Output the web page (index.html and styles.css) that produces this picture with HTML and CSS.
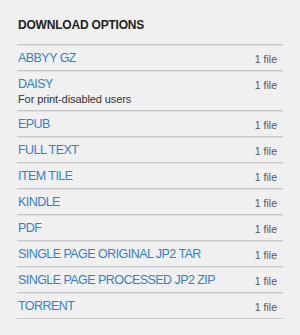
FILE: index.html
```html
<!DOCTYPE html>
<html lang="en">
<head>
  <meta charset="UTF-8">
  <title>Download Options</title>
  <link rel="stylesheet" href="styles.css">
</head>
<body>
<div class="panel">
  <h5 class="panel-title">DOWNLOAD OPTIONS</h5>
  <div class="format-group">
    <a class="format-summary" href="#"><span class="format-name">ABBYY GZ</span><span class="format-count">1 file</span></a>
  </div>
  <div class="format-group">
    <a class="format-summary" href="#"><span class="format-name">DAISY</span><span class="format-count">1 file</span></a>
    <div class="format-note">For print-disabled users</div>
  </div>
  <div class="format-group">
    <a class="format-summary" href="#"><span class="format-name">EPUB</span><span class="format-count">1 file</span></a>
  </div>
  <div class="format-group">
    <a class="format-summary" href="#"><span class="format-name">FULL TEXT</span><span class="format-count">1 file</span></a>
  </div>
  <div class="format-group">
    <a class="format-summary" href="#"><span class="format-name">ITEM TILE</span><span class="format-count">1 file</span></a>
  </div>
  <div class="format-group">
    <a class="format-summary" href="#"><span class="format-name">KINDLE</span><span class="format-count">1 file</span></a>
  </div>
  <div class="format-group">
    <a class="format-summary" href="#"><span class="format-name">PDF</span><span class="format-count">1 file</span></a>
  </div>
  <div class="format-group">
    <a class="format-summary" href="#"><span class="format-name">SINGLE PAGE ORIGINAL JP2 TAR</span><span class="format-count">1 file</span></a>
  </div>
  <div class="format-group">
    <a class="format-summary" href="#"><span class="format-name">SINGLE PAGE PROCESSED JP2 ZIP</span><span class="format-count">1 file</span></a>
  </div>
  <div class="format-group">
    <a class="format-summary" href="#"><span class="format-name">TORRENT</span><span class="format-count">1 file</span></a>
  </div>
</div>
</body>
</html>
```
FILE: styles.css
```css
*{box-sizing:border-box;margin:0;padding:0}
body{background:#f0f0f0;font-family:"Liberation Sans",Arial,Helvetica,sans-serif;color:#333}
.panel{padding:18px 17px 0 17px}
.panel-title{font-size:12px;font-weight:bold;color:#222;padding-left:1px;letter-spacing:-0.2px;line-height:14px;height:27px;border-bottom:1px solid #c8c8c8;box-shadow:0 1px 0 #e0e0e0}
.format-group{border-bottom:1px solid #c8c8c8;box-shadow:0 1px 0 #e0e0e0;padding:5px 6px 4px 1px}
.format-summary{display:flex;justify-content:space-between;align-items:baseline;text-decoration:none}
.format-name{font-size:12.5px;letter-spacing:-0.55px;color:#3580c4;line-height:16px}
.format-count{font-size:10.5px;color:#555;position:relative;top:1px}
.format-note{font-size:11px;color:#333;line-height:14px;letter-spacing:-0.1px}
```
